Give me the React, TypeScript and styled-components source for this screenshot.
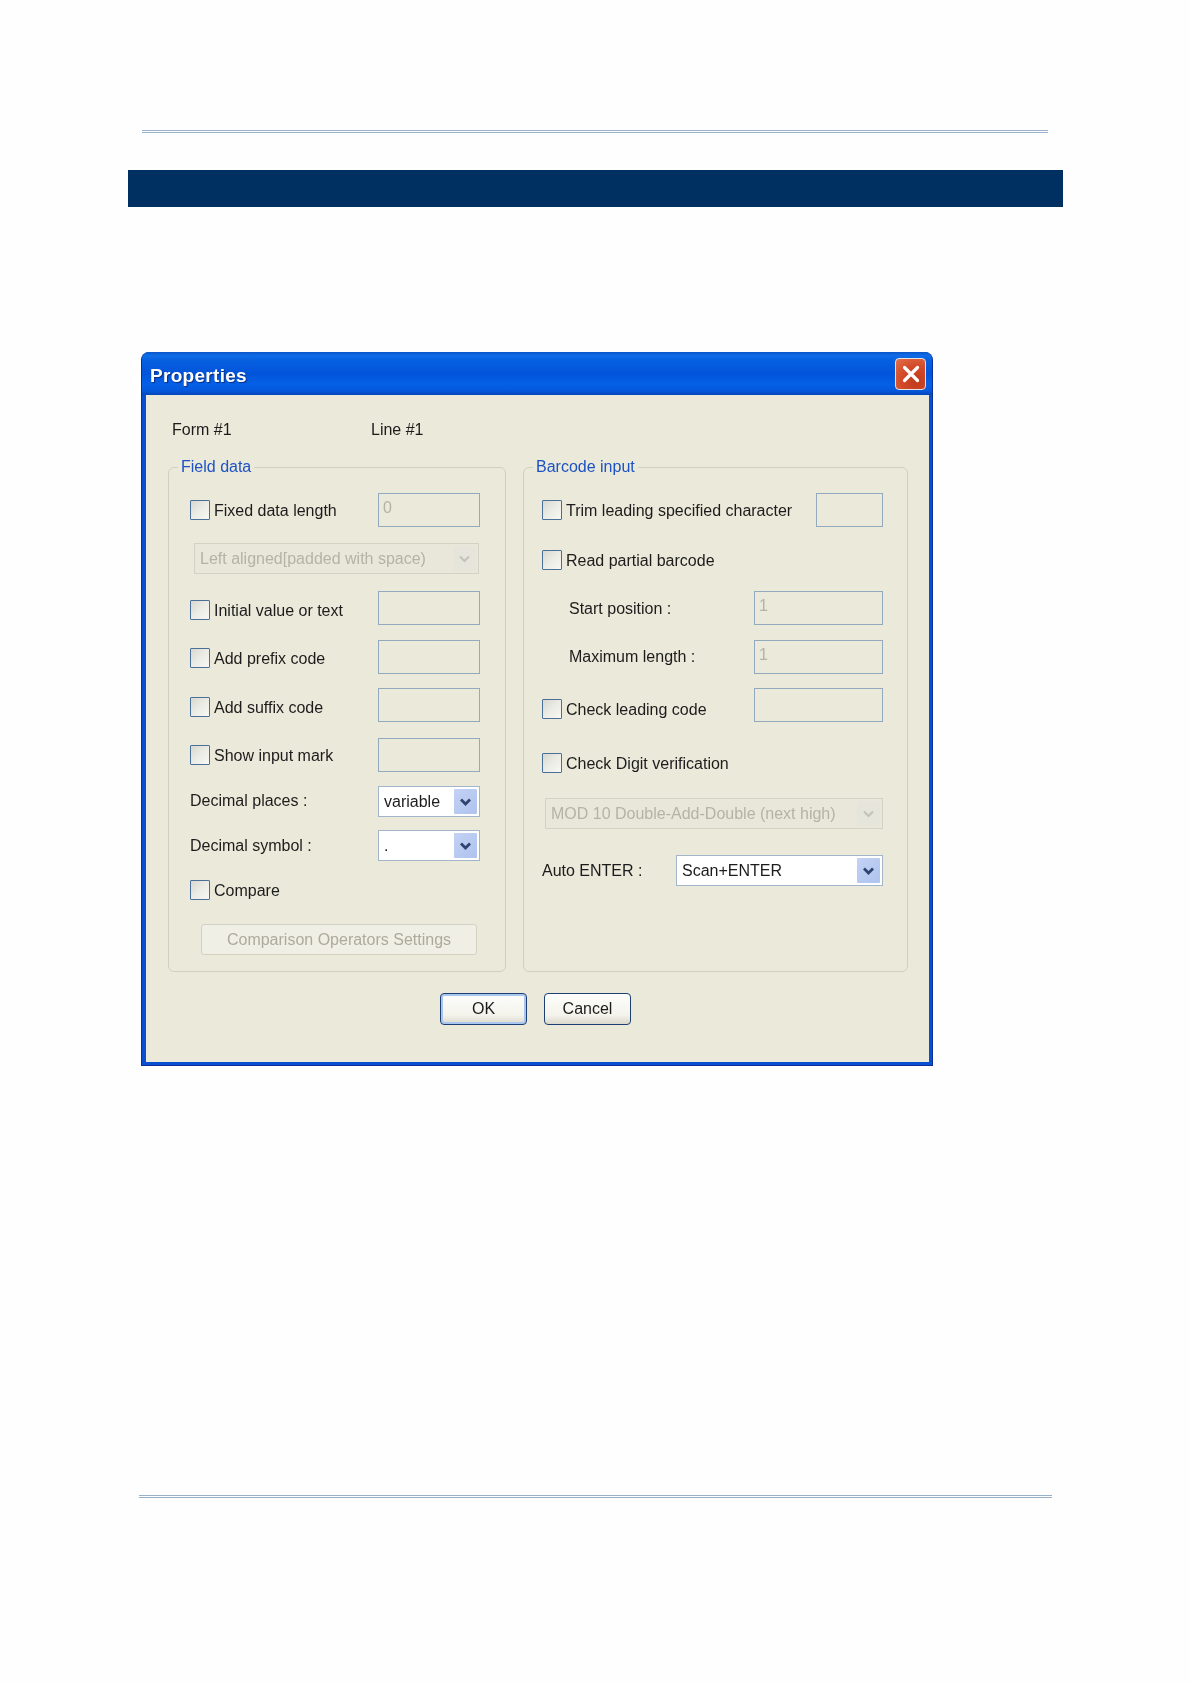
import React from "react";
import styled, { createGlobalStyle } from "styled-components";

const Global = createGlobalStyle`
  html, body { margin: 0; padding: 0; background: #fefefe; }
  * { box-sizing: border-box; }
`;

const Page = styled.div`
  width: 1190px;
  height: 1684px;
  padding-top: 130px;
  background: #fefefe;
  font-family: "Liberation Sans", Arial, sans-serif;
  overflow: hidden;
`;

const Rule = styled.div<{ $left: number; $width: number; $top?: number }>`
  height: 3px;
  margin-left: ${(p) => p.$left}px;
  margin-top: ${(p) => p.$top ?? 0}px;
  width: ${(p) => p.$width}px;
  border-top: 1px solid #98b0ca;
  border-bottom: 1px solid #98b0ca;
`;

const Band = styled.div`
  height: 37px;
  width: 935px;
  margin: 37px 0 0 128px;
  background: #003062;
`;

const Dialog = styled.div`
  width: 792px;
  height: 714px;
  margin: 145px 0 0 141px;
  border-radius: 8px 8px 0 0;
  background: #0a4ed2;
  border: solid #0a3098;
  border-width: 0 1px 1px 1px;
  display: flex;
  flex-direction: column;
  overflow: hidden;
  filter: blur(0.45px);
`;

const TitleBar = styled.div`
  height: 43px;
  flex: none;
  display: flex;
  align-items: center;
  justify-content: space-between;
  padding: 2px 6px 0 8px;
  background: linear-gradient(to bottom, #0a55c8 0%, #0f6ce6 8%, #0660e0 20%, #0254da 50%, #0560e6 75%, #0558dc 90%, #0346b8 100%);
`;

const Title = styled.div`
  color: #fff;
  font-weight: 700;
  font-size: 19px;
  letter-spacing: 0.3px;
  padding-top: 2px;
  text-shadow: 1px 1px 1px #0a2f80;
`;

const CloseButton = styled.div`
  width: 31px;
  height: 32px;
  margin-top: -1px;
  border: 1.5px solid #e8e4e0;
  border-radius: 4px;
  background: radial-gradient(circle at 70% 75%, #c03a1c 0%, #d24a28 50%, #e2704c 100%);
  display: flex;
  align-items: center;
  justify-content: center;
`;

const Body = styled.div`
  flex: 1;
  margin: 0 3px 3px 4px;
  background: #ebe9da;
  padding: 24px 0 0 22px;
  color: #1c1c1c;
  font-size: 16px;
`;

const HeadRow = styled.div`
  height: 20px;
  display: flex;
  align-items: center;
  padding: 1px 0 0 4px;
`;

const HeadItem = styled.div<{ $w: number }>`
  width: ${(p) => p.$w}px;
  white-space: nowrap;
`;

const Groups = styled.div`
  display: flex;
  margin-top: 28px;
  gap: 17px;
`;

const Group = styled.div<{ $w: number; $pl: number; $pr: number }>`
  position: relative;
  width: ${(p) => p.$w}px;
  height: 505px;
  border: 1.5px solid #d0d0bf;
  border-radius: 6px;
  padding: 25px ${(p) => p.$pr}px 0 ${(p) => p.$pl}px;
  display: flex;
  flex-direction: column;
  align-items: stretch;
`;

const Legend = styled.div`
  position: absolute;
  left: 9px;
  top: -11px;
  padding: 0 3px;
  line-height: 20px;
  background: #ebe9da;
  color: #1d52c4;
  font-size: 16px;
`;

const Row = styled.div<{ $h: number; $gap?: number; $ml?: number }>`
  height: ${(p) => p.$h}px;
  margin-top: ${(p) => p.$gap ?? 0}px;
  margin-left: ${(p) => p.$ml ?? 0}px;
  display: flex;
  align-items: flex-start;
  justify-content: space-between;
  flex: none;
`;

const Check = styled.div<{ $top?: number }>`
  display: flex;
  align-items: center;
  gap: 4px;
  height: 20px;
  margin-top: ${(p) => p.$top ?? 0}px;
  white-space: nowrap;
`;

const CheckCaption = styled.span`
  padding-top: 1px;
`;

const Box = styled.div`
  width: 20px;
  height: 20px;
  flex: none;
  border: 1.5px solid #4a6f98;
  border-radius: 1px;
  background: linear-gradient(135deg, #d8d8d0 0%, #ecece6 50%, #f8f8f4 100%);
`;

const PlainLabel = styled.div<{ $top: number }>`
  margin-top: ${(p) => p.$top}px;
  line-height: 20px;
  white-space: nowrap;
`;

const Field = styled.input<{ $w: number }>`
  width: ${(p) => p.$w}px;
  height: 34px;
  padding: 0 0 4px 4px;
  border: 1.5px solid #93a9bd;
  background: #ebe9da;
  font: inherit;
  color: #b5b3a4;
  outline: none;
  -webkit-text-fill-color: #b5b3a4;
  opacity: 1;
`;

const Select = styled.div<{ $w: number; $off?: boolean }>`
  width: ${(p) => p.$w}px;
  height: 31px;
  display: flex;
  align-items: center;
  justify-content: space-between;
  padding: 2px 2px 2px 5px;
  border: 1.5px solid ${(p) => (p.$off ? "#d3d2c4" : "#a3b5cb")};
  background: ${(p) => (p.$off ? "#e9e7d9" : "#fff")};
  color: ${(p) => (p.$off ? "#b5b3a4" : "#1c1c1c")};
  white-space: nowrap;
`;

const Arrow = styled.div<{ $off?: boolean }>`
  width: 23px;
  height: 100%;
  flex: none;
  border-radius: 1px;
  background: ${(p) => (p.$off ? "#e6e5dc" : "linear-gradient(135deg, #c4d2f4, #aec3ee)")};
  display: flex;
  align-items: center;
  justify-content: center;
`;

const GhostButton = styled.div`
  height: 31px;
  width: 276px;
  border: 1.5px solid #d3d1c4;
  border-radius: 3px;
  background: #f0efe5;
  color: #acaa9b;
  display: flex;
  align-items: center;
  justify-content: center;
`;

const Actions = styled.div`
  display: flex;
  gap: 17px;
  margin: 21px 0 0 272px;
`;

const PushButton = styled.div<{ $focus?: boolean }>`
  width: 87px;
  height: 32px;
  border: 1.5px solid #1e3f74;
  border-radius: 4px;
  background: linear-gradient(to bottom, #fdfdfb 0%, #f4f3ec 70%, #dcd9cc 100%);
  box-shadow: ${(p) => (p.$focus ? "inset 0 0 0 2px #a9c6ef" : "none")};
  display: flex;
  align-items: center;
  justify-content: center;
`;

const Chevron = ({ off }: { off?: boolean }) => (
  <svg width="13" height="10" viewBox="0 0 13 10" aria-hidden>
    <path d="M2 2.5 L6.5 7 L11 2.5" fill="none" stroke={off ? "#c2c2b8" : "#2f4470"} strokeWidth={off ? 2 : 2.8} />
  </svg>
);

const DropDown = ({ w, off, children }: { w: number; off?: boolean; children: React.ReactNode }) => (
  <Select $w={w} $off={off}>
    <span>{children}</span>
    <Arrow $off={off}>
      <Chevron off={off} />
    </Arrow>
  </Select>
);

const CheckText = ({ top, children }: { top?: number; children: React.ReactNode }) => (
  <Check $top={top}>
    <Box />
    <CheckCaption>{children}</CheckCaption>
  </Check>
);

export default function App() {
  return (
    <Page>
      <Global />
      <Rule $left={142} $width={906} />
      <Band />
      <Dialog>
        <TitleBar>
          <Title>Properties</Title>
          <CloseButton>
            <svg width="20" height="20" viewBox="0 0 20 20" aria-hidden>
              <path d="M3.5 3.5 L16.5 16.5 M16.5 3.5 L3.5 16.5" stroke="#fff" strokeWidth="3.2" strokeLinecap="round" />
            </svg>
          </CloseButton>
        </TitleBar>
        <Body>
          <HeadRow>
            <HeadItem $w={199}>Form #1</HeadItem>
            <HeadItem $w={100}>Line #1</HeadItem>
          </HeadRow>
          <Groups>
            <Group $w={338} $pl={21} $pr={25}>
              <Legend>Field data</Legend>
              <Row $h={34}>
                <CheckText top={7}>Fixed data length</CheckText>
                <Field $w={102} disabled defaultValue="0" />
              </Row>
              <Row $h={31} $gap={16} $ml={4}>
                <DropDown w={285} off>Left aligned[padded with space)</DropDown>
              </Row>
              <Row $h={34} $gap={17}>
                <CheckText top={9}>Initial value or text</CheckText>
                <Field $w={102} disabled />
              </Row>
              <Row $h={34} $gap={15}>
                <CheckText top={8}>Add prefix code</CheckText>
                <Field $w={102} disabled />
              </Row>
              <Row $h={34} $gap={14}>
                <CheckText top={9}>Add suffix code</CheckText>
                <Field $w={102} disabled />
              </Row>
              <Row $h={34} $gap={16}>
                <CheckText top={7}>Show input mark</CheckText>
                <Field $w={102} disabled />
              </Row>
              <Row $h={31} $gap={14}>
                <PlainLabel $top={5}>Decimal places :</PlainLabel>
                <DropDown w={102}>variable</DropDown>
              </Row>
              <Row $h={31} $gap={13}>
                <PlainLabel $top={6}>Decimal symbol :</PlainLabel>
                <DropDown w={102}>.</DropDown>
              </Row>
              <Row $h={20} $gap={19}>
                <CheckText>Compare</CheckText>
              </Row>
              <Row $h={31} $gap={24} $ml={11}>
                <GhostButton>Comparison Operators Settings</GhostButton>
              </Row>
            </Group>
            <Group $w={385} $pl={18} $pr={24}>
              <Legend>Barcode input</Legend>
              <Row $h={34}>
                <CheckText top={7}>Trim leading specified character</CheckText>
                <Field $w={67} disabled />
              </Row>
              <Row $h={20} $gap={23}>
                <CheckText>Read partial barcode</CheckText>
              </Row>
              <Row $h={34} $gap={21} $ml={27}>
                <PlainLabel $top={8}>Start position :</PlainLabel>
                <Field $w={129} disabled defaultValue="1" />
              </Row>
              <Row $h={34} $gap={15} $ml={27}>
                <PlainLabel $top={7}>Maximum length :</PlainLabel>
                <Field $w={129} disabled defaultValue="1" />
              </Row>
              <Row $h={34} $gap={14}>
                <CheckText top={11}>Check leading code</CheckText>
                <Field $w={129} disabled />
              </Row>
              <Row $h={20} $gap={31}>
                <CheckText>Check Digit verification</CheckText>
              </Row>
              <Row $h={31} $gap={25} $ml={3}>
                <DropDown w={339} off>MOD 10 Double-Add-Double (next high)</DropDown>
              </Row>
              <Row $h={31} $gap={26}>
                <PlainLabel $top={6}>Auto ENTER :</PlainLabel>
                <DropDown w={207}>Scan+ENTER</DropDown>
              </Row>
            </Group>
          </Groups>
          <Actions>
            <PushButton $focus>OK</PushButton>
            <PushButton>Cancel</PushButton>
          </Actions>
        </Body>
      </Dialog>
      <Rule $left={139} $width={913} $top={429} />
    </Page>
  );
}
